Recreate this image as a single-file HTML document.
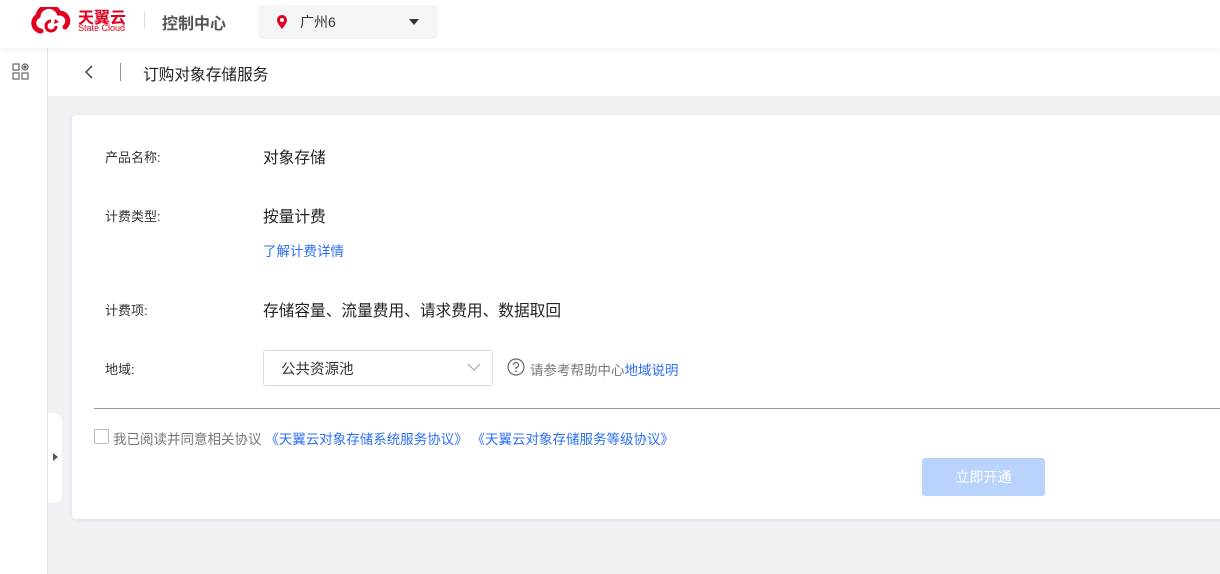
<!DOCTYPE html>
<html><head><meta charset="utf-8"><style>
*{margin:0;padding:0;box-sizing:border-box}
body{width:1220px;height:574px;overflow:hidden;background:#f0f1f5;font-family:"Liberation Sans","Noto Sans CJK SC",sans-serif;position:relative;color:#333}
.hdr{position:absolute;left:0;top:0;width:1220px;height:48px;background:#fff;box-shadow:0 2px 6px rgba(0,0,0,.06);z-index:3}
.side{position:absolute;left:0;top:48px;width:48px;height:526px;background:#fff;border-right:1px solid #e3e5ea;z-index:2}
.sub{position:absolute;left:48px;top:48px;width:1172px;height:48px;background:#fff}
.card{position:absolute;left:72px;top:115px;width:1160px;height:404px;background:#fff;border-radius:4px;box-shadow:0 1px 4px rgba(0,0,0,.08)}
.t{position:absolute;white-space:nowrap}
.lab{font-size:13px;color:#333}
.val{font-size:15.7px;color:#222}
.blue{color:#2d6ff7}
</style></head><body>
<div class="hdr">
 <svg class="t" style="left:29px;top:7px" width="46" height="28" viewBox="0 0 46 28"><path d="M12 24 A8 8 0 0 1 9 9 A11 11 0 0 1 30 6 A8 8 0 0 1 36 20" fill="none" stroke="#e1001f" stroke-width="5" stroke-linecap="round"/><path d="M22 14 a5 5 0 1 0 5 5" fill="none" stroke="#e1001f" stroke-width="3"/><path d="M26 12 l4 3 -5 2z" fill="#e1001f"/></svg>
 <div class="t" style="left:78px;top:4px;font-size:16px;font-weight:bold;color:#e1001f;letter-spacing:0">天翼云</div>
 <div class="t" style="left:78px;top:23px;font-size:9px;color:#e1001f">State Cloud</div>
 <div class="t" style="left:144px;top:11px;width:1px;height:18px;background:#ddd"></div>
 <div class="t" style="left:162px;top:10px;font-size:16px;color:#555;font-weight:bold">控制中心</div>
 <div class="t" style="left:258px;top:5px;width:180px;height:34px;background:#f4f5f7;border-radius:4px"></div>
 <svg class="t" style="left:276px;top:14px" width="12" height="16" viewBox="0 0 12 16"><path d="M6 15 C2 10 1 8 1 6 A5 5 0 0 1 11 6 C11 8 10 10 6 15Z" fill="#e1001f"/><circle cx="6" cy="6" r="2" fill="#fff"/></svg>
 <div class="t" style="left:300px;top:12px;font-size:14px;color:#333">广州6</div>
 <div class="t" style="left:409px;top:19px;border:5px solid transparent;border-top:6px solid #333"></div>
</div>
<div class="side">
 <svg class="t" style="left:12px;top:15px" width="18" height="18" viewBox="0 0 18 18" fill="none" stroke="#666" stroke-width="1.2"><rect x="1" y="1" width="6" height="6"/><rect x="1" y="10" width="6" height="6"/><rect x="10" y="10" width="6" height="6"/><circle cx="13" cy="4" r="3"/><circle cx="13" cy="4" r="1" fill="#666"/></svg>
</div>
<div class="t" style="left:48px;top:413px;width:14px;height:90px;background:#fff;border-radius:0 8px 8px 0;z-index:4"></div>
<div class="t" style="left:53px;top:453px;border:4px solid transparent;border-left:5px solid #555;z-index:5"></div>
<div class="sub">
 <svg class="t" style="left:36px;top:17px" width="10" height="14" viewBox="0 0 10 14"><path d="M8 1 L2 7 L8 13" fill="none" stroke="#333" stroke-width="1.4"/></svg>
 <div class="t" style="left:72px;top:15px;width:1px;height:18px;background:#999"></div>
 <div class="t" style="left:95px;top:14px;font-size:15.7px;color:#222">订购对象存储服务</div>
</div>
<div class="card">
 <div class="t lab" style="left:33px;top:32px">产品名称:</div>
 <div class="t val" style="left:191px;top:30px">对象存储</div>
 <div class="t lab" style="left:33px;top:91px">计费类型:</div>
 <div class="t val" style="left:191px;top:89px">按量计费</div>
 <div class="t blue" style="left:191px;top:125px;font-size:13.5px">了解计费详情</div>
 <div class="t lab" style="left:33px;top:185px">计费项:</div>
 <div class="t val" style="left:191px;top:183px">存储容量、流量费用、请求费用、数据取回</div>
 <div class="t lab" style="left:33px;top:244px">地域:</div>
 <div class="t" style="left:191px;top:235px;width:230px;height:36px;border:1px solid #d9d9d9;border-radius:3px"></div>
 <div class="t" style="left:209px;top:243px;font-size:14.5px;color:#333">公共资源池</div>
 <svg class="t" style="left:395px;top:248px" width="14" height="9" viewBox="0 0 14 9"><path d="M1 1 L7 7 L13 1" fill="none" stroke="#aaa" stroke-width="1.2"/></svg>
 <svg class="t" style="left:435px;top:243px" width="18" height="18" viewBox="0 0 18 18"><circle cx="9" cy="9" r="8" fill="none" stroke="#666" stroke-width="1.2"/><path d="M6.5 7 A2.5 2.5 0 1 1 9 9.5 V11" fill="none" stroke="#666" stroke-width="1.3"/><circle cx="9" cy="13.3" r=".9" fill="#666"/></svg>
 <div class="t" style="left:458px;top:244px;font-size:13.5px;color:#777">请参考帮助中心<span class="blue">地域说明</span></div>
 <div class="t" style="left:22px;top:293px;width:1140px;height:1px;background:#999"></div>
 <div class="t" style="left:22px;top:314px;width:15px;height:15px;border:1px solid #bbb;border-radius:2px"></div>
 <div class="t" style="left:41px;top:313px;font-size:13.5px;color:#777">我已阅读并同意相关协议 <span class="blue">《天翼云对象存储系统服务协议》 《天翼云对象存储服务等级协议》</span></div>
 <div class="t" style="left:850px;top:343px;width:123px;height:38px;background:#b9d3fd;border-radius:3px;color:#fff;font-size:14px;text-align:center;line-height:38px">立即开通</div>
</div>
</body></html>
